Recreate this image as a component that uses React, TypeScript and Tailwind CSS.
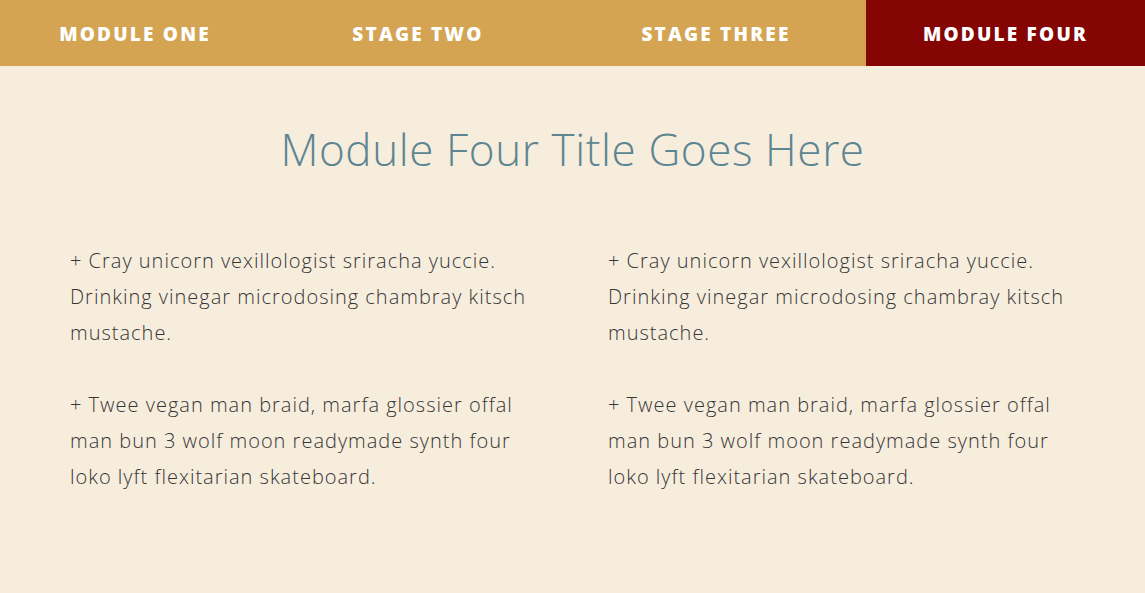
const tabs = [
  { label: 'Module One', width: 'w-[270px]' },
  { label: 'Stage Two', width: 'w-[296px]' },
  { label: 'Stage Three', width: 'w-[300px]' },
  { label: 'Module Four', width: 'flex-1', active: true },
];

const paragraphs = [
  ['+ Cray unicorn vexillologist sriracha yuccie.', 'Drinking vinegar microdosing chambray kitsch', 'mustache.'],
  ['+ Twee vegan man braid, marfa glossier offal', 'man bun 3 wolf moon readymade synth four', 'loko lyft flexitarian skateboard.'],
];

function Column() {
  return (
    <div className="flex flex-col gap-9">
      {paragraphs.map((lines, i) => (
        <p key={i} className="text-[20px] leading-[36px] font-[350] tracking-[1px] text-[#363636]">
          {lines.map((line, j) => (
            <span key={j} className="block whitespace-nowrap">
              {line}
            </span>
          ))}
        </p>
      ))}
    </div>
  );
}

export default function App() {
  return (
    <div
      className="min-h-[593px] bg-[#f7eddd]"
      style={{ fontFamily: '"Open Sans", "Noto Sans", sans-serif' }}
    >
      {/* Tabs */}
      <nav className="flex h-[66px]">
        {tabs.map((tab) => (
          <div
            key={tab.label}
            className={`${tab.width} flex items-center justify-center pt-[2px] text-[19px] font-extrabold uppercase tracking-[2.2px] text-white ${
              tab.active ? 'bg-[#850505]' : 'bg-[#d4a452]'
            }`}
          >
            {tab.label}
          </div>
        ))}
      </nav>

      {/* Content */}
      <section className="pt-[51px] pb-[80px]">
        <h1 className="text-center text-[44px] leading-[64px] font-light tracking-[0.6px] text-[#5e8592]">
          Module Four Title Goes Here
        </h1>
        <div className="mt-[62px] grid grid-cols-[538px_1fr] pl-[70px]">
          <Column />
          <Column />
        </div>
      </section>
    </div>
  );
}
